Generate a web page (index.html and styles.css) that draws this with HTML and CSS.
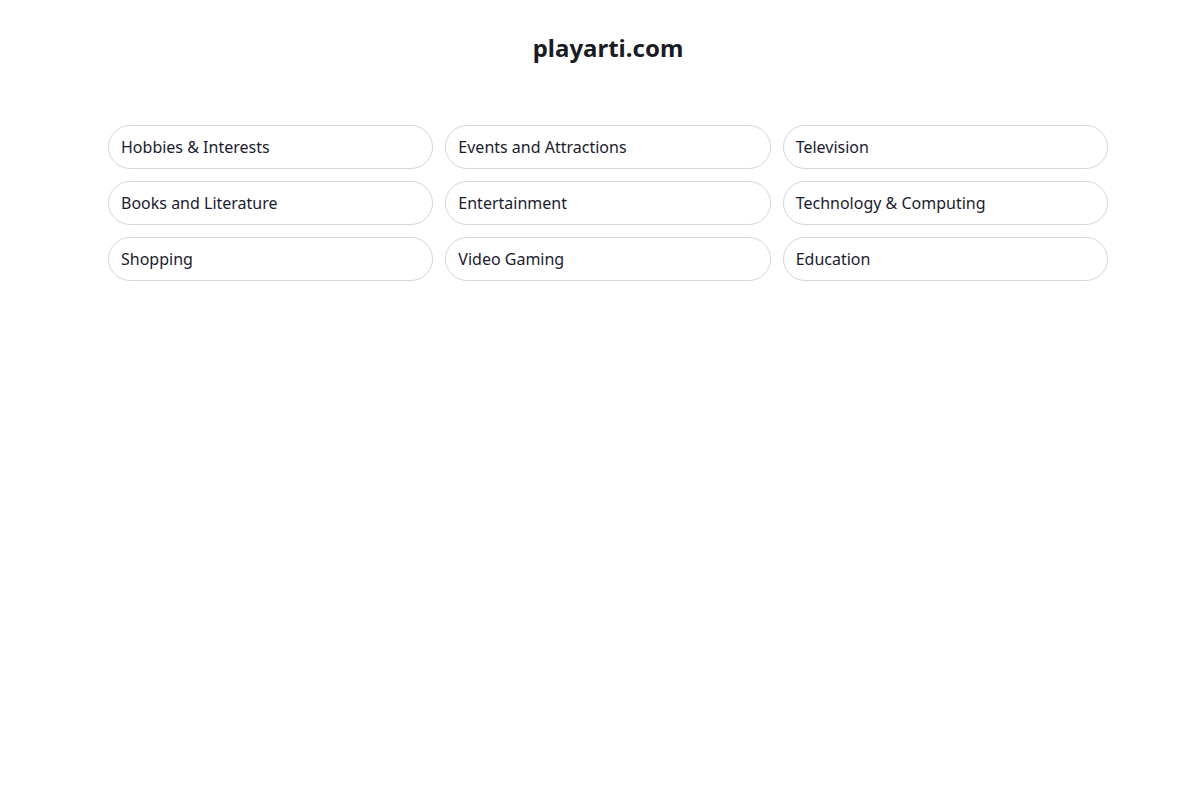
FILE: index.html
```html
<!DOCTYPE html>
<html>
<head>
<meta charset="utf-8">
<link rel="stylesheet" href="styles.css">
</head>
<body>
<div class="page">
  <h1 class="title">playarti.com</h1>
  <div class="grid">
    <a class="pill">Hobbies &amp; Interests</a>
    <a class="pill">Events and Attractions</a>
    <a class="pill">Television</a>
    <a class="pill">Books and Literature</a>
    <a class="pill">Entertainment</a>
    <a class="pill">Technology &amp; Computing</a>
    <a class="pill">Shopping</a>
    <a class="pill">Video Gaming</a>
    <a class="pill">Education</a>
  </div>
</div>
</body>
</html>
```
FILE: styles.css
```css
html, body {
  margin: 0;
  padding: 0;
  background: #ffffff;
  font-family: "Noto Sans", sans-serif;
  color: #1b1b2a;
}
body {
  padding-left: 16px;
}
.page {
  width: 1000px;
  margin: 0 auto;
  padding-top: 32px;
}
.title {
  margin: 0;
  text-align: center;
  font-size: 24px;
  line-height: 32px;
  font-weight: 700;
  color: #1b1b24;
}
.grid {
  margin-top: 61px;
  display: grid;
  grid-template-columns: repeat(3, 1fr);
  gap: 12px;
}
.pill {
  display: flex;
  align-items: center;
  height: 44px;
  box-sizing: border-box;
  padding: 0 12px;
  border: 1px solid #d6d6dc;
  border-radius: 22px;
  font-size: 16px;
  color: #1b1b2e;
  text-decoration: none;
}
```
